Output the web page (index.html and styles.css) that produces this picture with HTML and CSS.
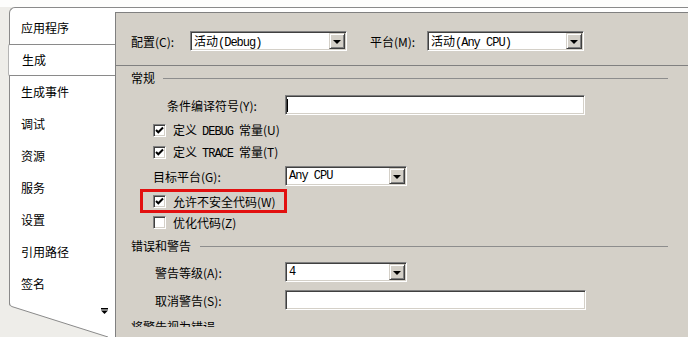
FILE: index.html
```html
<!DOCTYPE html>
<html lang="zh-CN">
<head>
  <meta charset="UTF-8">
  <meta name="viewport" content="width=device-width, initial-scale=1.0">
  <title>项目属性 - 生成</title>
  <link rel="stylesheet" href="styles.css">
</head>
<body>

  <div class="window">
    <div class="tabs">
      <div class="tab">应用程序</div>
      <div class="tab active">生成</div>
      <div class="tab">生成事件</div>
      <div class="tab">调试</div>
      <div class="tab">资源</div>
      <div class="tab">服务</div>
      <div class="tab">设置</div>
      <div class="tab">引用路径</div>
      <div class="tab">签名</div>
      <svg class="tabs-end" width="106" height="37" viewBox="0 0 106 37">
        <path d="M0,3 Q0,6 3,6.6 L99,37 L0,37 Z" fill="#eeede9"/>
        <path d="M0.5,0 V3 Q0.5,6 3,6.6 L99,37" fill="none" stroke="#8a8a8a" stroke-width="1"/>
        <rect x="92" y="8" width="7" height="1.5" fill="#000"/>
        <path d="M92,10.5 H99 L95.5,14 Z" fill="#000"/>
      </svg>
    </div>

    <div class="panel">
      <div class="config">
        <span class="config-label">配置(C):</span>
        <div class="combo config-combo">
          <span>活动<span class="mono">(Debug)</span></span>
          <i class="drop"></i>
        </div>
        <span class="config-label platform">平台(M):</span>
        <div class="combo config-combo">
          <span>活动<span class="mono">(Any CPU)</span></span>
          <i class="drop"></i>
        </div>
      </div>

      <div class="rule"></div>

      <div class="scroll">
        <div class="group">常规</div>

        <div class="field symbols">
          <span class="field-label">条件编译符号(Y):</span>
          <div class="edit"><span class="caret"></span></div>
        </div>

        <div class="check-row first">
          <span class="check"><svg width="9" height="9" viewBox="0 0 9 9"><polyline points="1,4 3.3,6.3 8,1.5" fill="none" stroke="#000" stroke-width="2"/></svg></span>
          <span>定义<span class="mono word">DEBUG</span>常量(U)</span>
        </div>
        <div class="check-row">
          <span class="check"><svg width="9" height="9" viewBox="0 0 9 9"><polyline points="1,4 3.3,6.3 8,1.5" fill="none" stroke="#000" stroke-width="2"/></svg></span>
          <span>定义<span class="mono word">TRACE</span>常量(T)</span>
        </div>

        <div class="field target">
          <span class="field-label">目标平台(G):</span>
          <div class="combo small-combo">
            <span class="mono">Any CPU</span>
            <i class="drop"></i>
          </div>
        </div>

        <div class="check-row marked">
          <span class="check"><svg width="9" height="9" viewBox="0 0 9 9"><polyline points="1,4 3.3,6.3 8,1.5" fill="none" stroke="#000" stroke-width="2"/></svg></span>
          <span>允许不安全代码(W)</span>
        </div>
        <div class="check-row short">
          <span class="check"></span>
          <span>优化代码(Z)</span>
        </div>

        <div class="group errors">错误和警告</div>

        <div class="field level">
          <span class="field-label">警告等级(A):</span>
          <div class="combo small-combo">
            <span class="mono">4</span>
            <i class="drop"></i>
          </div>
        </div>

        <div class="field suppress">
          <span class="field-label">取消警告(S):</span>
          <div class="edit"></div>
        </div>

        <div class="group tail">将警告视为错误</div>
      </div>
    </div>
  </div>

</body>
</html>
```

FILE: styles.css
```css
* {
  margin: 0;
  padding: 0;
  box-sizing: border-box;
}

html, body {
  height: 337px;
  overflow: hidden;
}

body {
  font-family: "Noto Sans CJK SC", "Noto Sans", sans-serif;
  font-size: 12px;
  color: #000;
  background: linear-gradient(#fdfdfc 0, #fdfdfc 7px, #eeede9 7px);
}

.mono {
  font-family: "Liberation Mono", "Noto Sans CJK SC", monospace;
  font-size: 12px;
  letter-spacing: -1px;
}

.mono.word {
  margin: 0 6px 0 5px;
}

/* outer frame */
.window {
  display: flex;
  height: 330px;
  margin: 7px 0 0 9px;
  background: #fff;
  border-top: 1px solid #8a8a8a;
  border-left: 1px solid #8a8a8a;
  border-top-left-radius: 6px;
}

/* left tab list */
.tabs {
  flex: none;
  width: 105px;
  display: flex;
  flex-direction: column;
  padding-top: 4px;
}

.tab {
  height: 32px;
  line-height: 32px;
  padding-left: 11px;
}

.tab.active {
  margin-left: -2px;
  padding-left: 13px;
  line-height: 30px;
  border-top: 1px solid #8a8a8a;
  border-bottom: 1px solid #8a8a8a;
  border-left: 1px solid #b4b4b4;
  border-top-left-radius: 2px;
  border-bottom-left-radius: 2px;
  background: #fff;
}

.tabs-end {
  display: block;
  flex: none;
  margin-left: -1px;
}

/* property page */
.panel {
  flex: 1;
  display: flex;
  flex-direction: column;
  margin-top: 4px;
  background: #d4d0c8;
  border-top: 1px solid #808080;
  border-left: 1px solid #808080;
}

.config {
  display: flex;
  align-items: center;
  height: 20px;
  margin-top: 18px;
  padding-left: 15px;
  flex: none;
}

.config-label {
  flex: none;
  width: 59px;
}

.config-label.platform {
  width: 57px;
  margin-left: 23px;
}

.config-combo {
  width: 157px;
}

.rule {
  flex: none;
  height: 1px;
  margin-top: 14px;
  background: #808080;
}

.scroll {
  flex: none;
  height: 261px;
  overflow: hidden;
  padding: 0 20px 0 15px;
}

.group {
  display: flex;
  align-items: center;
  height: 14px;
  line-height: 14px;
  margin-top: 5px;
}

.group::after {
  content: "";
  flex: 1;
  height: 1px;
  margin-left: 8px;
  background: #8d8d8d;
}

.group.errors {
  margin-top: 8px;
}

.group.errors::after {
  margin-left: 9px;
}

.group.tail {
  margin-top: 10px;
}

/* label + control rows */
.field {
  display: flex;
  align-items: center;
  height: 20px;
}

.field-label {
  flex: none;
  width: 154px;
  padding-left: 22px;
}

.field.symbols {
  margin-top: 10px;
}

.field.symbols .field-label {
  padding-left: 36px;
}

.field.target {
  margin-top: 3px;
}

.field.level {
  margin-top: 9px;
}

.field.level .field-label,
.field.suppress .field-label {
  padding-left: 24px;
}

.field.suppress {
  margin-top: 8px;
}

.field.symbols .edit {
  width: 300px;
}

.field.suppress .edit {
  width: 301px;
}

/* sunken win32 controls */
.edit,
.combo,
.check {
  background: #fff;
  border: 1px solid;
  border-color: #808080 #fff #fff #808080;
  box-shadow: inset 1px 1px #404040, inset -1px -1px #d4d0c8;
}

.edit {
  height: 20px;
  display: flex;
  align-items: center;
  padding-left: 1px;
}

.caret {
  width: 1px;
  height: 13px;
  background: #000;
}

.combo {
  display: flex;
  align-items: center;
  height: 20px;
  padding-left: 3px;
  white-space: nowrap;
}

.small-combo {
  width: 122px;
}

.drop {
  flex: none;
  display: flex;
  align-items: center;
  justify-content: center;
  width: 16px;
  height: 16px;
  margin-left: auto;
  margin-right: 1px;
  background: #d4d0c8;
  border: 1px solid;
  border-color: #d4d0c8 #404040 #404040 #d4d0c8;
  box-shadow: inset 1px 1px #fff, inset -1px -1px #808080;
}

.drop::before {
  content: "";
  border-top: 4px solid #000;
  border-left: 4px solid transparent;
  border-right: 4px solid transparent;
  margin-top: 1px;
}

/* checkboxes */
.check-row {
  display: flex;
  align-items: center;
  gap: 7px;
  height: 22px;
  padding-left: 22px;
}

.check-row.first {
  margin-top: 4px;
}

.check-row.marked {
  width: 147px;
  height: 24px;
  margin-top: 3px;
  margin-left: 9px;
  padding-left: 10px;
  border: 3px solid #e21010;
}

.check-row.short {
  height: 18px;
}

.check {
  flex: none;
  display: flex;
  align-items: center;
  justify-content: center;
  width: 13px;
  height: 13px;
}
```
